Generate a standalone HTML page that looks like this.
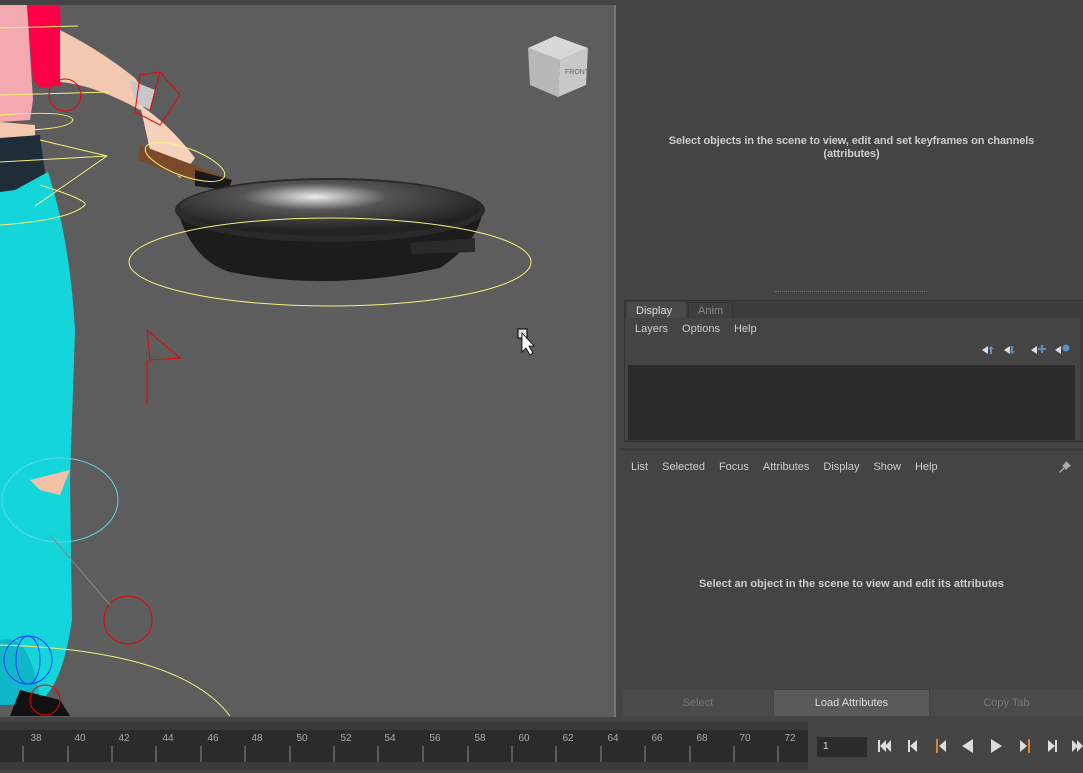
<!DOCTYPE html>
<html><head><meta charset="utf-8"><style>
*{margin:0;padding:0;box-sizing:border-box}
body{width:1083px;height:773px;background:#444;font-family:"Liberation Sans",sans-serif;font-size:11px;color:#ccc;position:relative;overflow:hidden}
.a{position:absolute}
.menu span{margin-right:14px}
.pb{position:absolute;top:738px;color:#ddd;font-size:13px}
</style></head><body>
<div class="a" style="left:0;top:0;width:616px;height:5px;background:#444"></div>
<svg class="a" style="left:0;top:5px" width="616" height="712" viewBox="0 5 616 712">
<rect x="0" y="5" width="614" height="712" fill="#5d5d5d"/>
<rect x="614" y="5" width="2" height="712" fill="#777"/>
<path d="M0 5 L27 5 L33 100 L30 120 L0 122Z" fill="#f4a8b0"/>
<path d="M27 5 L60 5 L62 85 L40 88 L33 80Z" fill="#ff0048"/>
<path d="M60 30 Q100 50 135 78 L150 100 L140 110 Q95 85 60 82Z" fill="#f3c8b0"/>
<path d="M130 80 L155 90 L150 110 L135 102Z" fill="#c8c8cc"/>
<path d="M140 105 Q170 125 195 158 L180 178 L150 150Z" fill="#f6d2bc"/>
<path d="M0 122 L35 125 L35 140 L42 190 L0 192Z" fill="#f3c7b0"/>
<path d="M0 138 L40 135 L46 180 L14 195 L0 195Z" fill="#1e2d38"/>
<path d="M0 192 L15 190 L48 172 Q70 240 75 330 Q72 420 70 480 L72 620 Q60 700 30 705 L0 700Z" fill="#14d6da"/>
<path d="M30 480 L70 470 L60 495 L40 490Z" fill="#f3c0a8"/>
<path d="M0 640 Q30 630 40 700 L10 705 L0 705Z" fill="#0fb8c8"/>
<path d="M20 690 L60 700 L70 716 L10 716Z" fill="#111"/>
<path d="M140 145 L228 178 L234 190 L215 190 L138 160Z" fill="#7a4a2a"/>
<path d="M195 170 L232 180 L228 190 L195 186Z" fill="#1a1a1a"/>
<defs><radialGradient id="g" cx="0.45" cy="0.3" r="0.6"><stop offset="0" stop-color="#eee"/><stop offset="0.4" stop-color="#555"/><stop offset="1" stop-color="#222"/></radialGradient></defs>
<path d="M176 205 Q190 260 230 272 Q330 292 440 268 Q475 245 482 215 Z" fill="#1c1c1c"/>
<ellipse cx="330" cy="210" rx="155" ry="32" fill="#2a2a2a"/>
<ellipse cx="330" cy="208" rx="150" ry="28" fill="url(#g)"/>
<path d="M410 243 L475 238 L475 252 L412 254Z" fill="#2a2a2a"/>
<g fill="none" stroke="#f5f07a" stroke-width="1">
<ellipse cx="330" cy="262" rx="201" ry="44"/>
<path d="M0 28 L78 26 M0 95 L110 92 M0 115 Q70 110 73 120 Q70 128 30 130 M40 140 L107 156 L0 162 M107 156 L35 206 M40 185 Q88 200 85 205 Q70 220 0 225"/>
<ellipse cx="185" cy="162" rx="42" ry="14" transform="rotate(20 185 162)"/>
<path d="M0 645 Q180 650 230 716"/>
</g>
<g fill="none" stroke="#e00" stroke-width="1">
<circle cx="65" cy="95" r="16"/><path d="M140 75 L160 72 L180 95 L160 125 L135 112 Z M160 72 L150 110"/>
<path d="M147 330 L150 360 L180 358 Z M147 360 L147 405"/>
<circle cx="128" cy="620" r="24"/><circle cx="45" cy="700" r="15"/>
</g>
<g fill="none" stroke="#1a3cff" stroke-width="1"><circle cx="28" cy="660" r="24"/><ellipse cx="28" cy="660" rx="12" ry="24"/></g>
<ellipse cx="60" cy="500" rx="58" ry="42" fill="none" stroke="#5ad8e8"/>
<path d="M50 535 L110 605" stroke="#888"/>
<path d="M528 48 L555 36 L588 48 L560 60Z" fill="#d8d8d8"/>
<path d="M528 48 L560 60 L558 97 L530 85Z" fill="#b8b8b8"/>
<path d="M560 60 L588 48 L586 85 L558 97Z" fill="#c8c8c8"/>
<text x="565" y="74" font-size="7" fill="#666" font-family="Liberation Sans">FRONT</text>
<rect x="518" y="329" width="9" height="9" fill="#ddd" stroke="#000"/>
<path d="M522 333 L522 352 L526 348 L530 355 L533 353 L529 346 L534 346Z" fill="#fff" stroke="#000" stroke-width="0.8"/>
</svg>
<div class="a" style="left:620px;top:0;width:463px;height:720px;background:#444"></div>
<div class="a" style="left:620px;top:135px;width:463px;text-align:center;font-weight:bold;font-size:11px;color:#ccc;line-height:13px;letter-spacing:-0.1px">Select objects in the scene to view, edit and set keyframes on channels<br>(attributes)</div>
<div class="a" style="left:775px;top:291px;width:152px;border-top:1px dotted #777"></div>
<div class="a" style="left:624px;top:300px;width:462px;height:142px;background:#3c3c3c;border:1px solid #333"></div>
<div class="a" style="left:627px;top:302px;width:59px;height:17px;background:#494949;color:#ddd;padding:3px 0 0 9px">Display</div>
<div class="a" style="left:688px;top:302px;width:45px;height:17px;background:#3e3e3e;border:1px solid #333;color:#888;padding:2px 0 0 9px">Anim</div>
<div class="a" style="left:625px;top:318px;width:455px;height:122px;background:#444"></div>
<div class="a menu" style="left:635px;top:323px"><span>Layers</span><span>Options</span><span>Help</span></div>
<svg class="a" style="left:980px;top:343px" width="95" height="14">
<g fill="#ddd"><path d="M2 7 L8 3 L8 11Z"/><path d="M24 7 L30 3 L30 11Z"/><path d="M51 7 L57 3 L57 11Z"/><path d="M75 7 L81 3 L81 11Z"/></g>
<g fill="#5a8fc8"><path d="M10 11V6H8L11 3L14 6H12V11Z"/><path d="M31 3V8H29L32 11L35 8H33V3Z"/><path d="M58 5H61V2H63V5H66V7H63V10H61V7H58Z"/><circle cx="86" cy="5" r="3.5"/></g>
</svg>
<div class="a" style="left:628px;top:365px;width:447px;height:75px;background:#2b2b2b"></div>
<div class="a" style="left:620px;top:448px;width:463px;height:3px;background:#3a3a3a"></div>
<div class="a menu" style="left:631px;top:461px"><span>List</span><span>Selected</span><span>Focus</span><span>Attributes</span><span>Display</span><span>Show</span><span>Help</span></div>
<svg class="a" style="left:1058px;top:460px" width="14" height="14"><path d="M8 1 L13 6 L11 7 L8 10 L7 8 L2 13 L1 12 L6 7 L4 6 L7 3Z" fill="#aaa"/></svg>
<div class="a" style="left:620px;top:578px;width:463px;text-align:center;font-weight:bold;color:#ccc">Select an object in the scene to view and edit its attributes</div>
<div class="a" style="left:623px;top:690px;width:150px;height:26px;background:#4a4a4a;color:#777;text-align:center;line-height:26px">Select</div>
<div class="a" style="left:774px;top:690px;width:155px;height:26px;background:#5a5a5a;color:#ddd;text-align:center;line-height:26px">Load Attributes</div>
<div class="a" style="left:930px;top:690px;width:153px;height:26px;background:#4a4a4a;color:#777;text-align:center;line-height:26px">Copy Tab</div>
<div class="a" style="left:0;top:718px;width:1083px;height:55px;background:#444"></div>
<div class="a" style="left:0;top:722px;width:808px;height:48px;background:#3a3a3a"></div>
<div class="a" style="left:0;top:730px;width:808px;height:32px;background:#2b2b2b"></div>
<div class="a" style="left:0;top:730px;width:808px;height:32px">
<svg width="808" height="32">
<g fill="#aaa" font-size="10" font-family="Liberation Sans" text-anchor="middle">
<text x="36" y="11">38</text><text x="80" y="11">40</text><text x="124" y="11">42</text><text x="168" y="11">44</text><text x="213" y="11">46</text><text x="257" y="11">48</text><text x="302" y="11">50</text><text x="346" y="11">52</text><text x="390" y="11">54</text><text x="435" y="11">56</text><text x="480" y="11">58</text><text x="524" y="11">60</text><text x="568" y="11">62</text><text x="613" y="11">64</text><text x="657" y="11">66</text><text x="702" y="11">68</text><text x="745" y="11">70</text><text x="790" y="11">72</text></g>
<g stroke="#888"><path d="M23 16V32M68 16V32M112 16V32M156 16V32M201 16V32M245 16V32M290 16V32M334 16V32M378 16V32M423 16V32M468 16V32M512 16V32M556 16V32M601 16V32M645 16V32M690 16V32M734 16V32M778 16V32"/></g>
</svg></div>
<div class="a" style="left:817px;top:737px;width:50px;height:20px;background:#2b2b2b;color:#ddd;padding:4px 0 0 6px;font-size:10px">1</div>
<svg class="a" style="left:874px;top:736px" width="209" height="20">
<g fill="#ddd">
<rect x="4" y="4" width="2" height="12"/><path d="M6 10L12 4V16Z"/><path d="M11 10L17 4V16Z"/>
<rect x="34" y="4" width="2" height="12"/><path d="M36 10L43 4V16Z"/>
<rect x="62" y="3" width="2" height="14" fill="#e08030"/><path d="M65 10L72 4V16Z"/>
<path d="M88 10L99 3V17Z"/>
<path d="M117 3L128 10L117 17Z"/>
<path d="M146 4L153 10L146 16Z"/><rect x="154" y="3" width="2" height="14" fill="#e08030"/>
<path d="M174 4L181 10L174 16Z"/><rect x="181" y="4" width="2" height="12"/>
<path d="M198 4L204 10L198 16Z"/><path d="M203 4L209 10L203 16Z"/>
</g></svg>
</body></html>
